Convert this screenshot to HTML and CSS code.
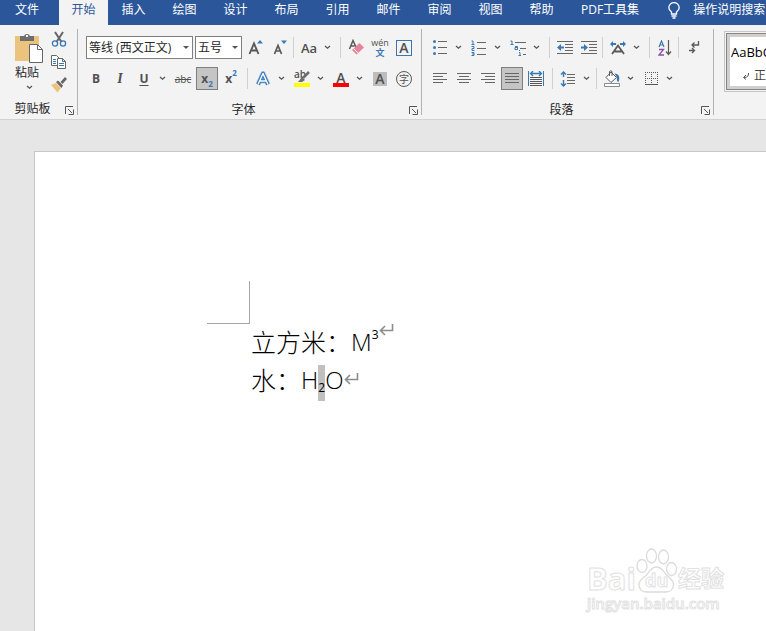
FILE: index.html
```
<!DOCTYPE html>
<html lang="zh-CN">
<head>
    <meta charset="utf-8">
    <title>Word</title>
    <link rel="stylesheet" href="styles.css">
</head>
<body>
    <svg class="defs" aria-hidden="true">
        <symbol id="chevron" viewBox="0 0 7 5"><path d="M1 1l2.500 2.200L6 1" fill="none" stroke="#555" stroke-width="1.300"/></symbol>
        <symbol id="launcher" viewBox="0 0 9 9"><path d="M.5 8V.5H8M3 3l4 4M8.500 3.500v5h-5" fill="none" stroke="#555"/></symbol>
        <symbol id="return" viewBox="0 0 15 12"><path d="M13.500 0v6.500H1.500M6 2L1.500 6.500 6 11" fill="none" stroke="#8c8c8c" stroke-width="1.600"/></symbol>
    </svg>

    <nav class="tabs">
        <a class="tab tab--file" href="#">文件</a>
        <a class="tab tab--active" href="#">开始</a>
        <a class="tab" href="#">插入</a>
        <a class="tab" href="#">绘图</a>
        <a class="tab" href="#">设计</a>
        <a class="tab" href="#">布局</a>
        <a class="tab" href="#">引用</a>
        <a class="tab" href="#">邮件</a>
        <a class="tab" href="#">审阅</a>
        <a class="tab" href="#">视图</a>
        <a class="tab" href="#">帮助</a>
        <a class="tab tab--wide" href="#">PDF工具集</a>
        <a class="tell-me" href="#">
            <svg width="12" height="17" viewBox="0 0 12 17" fill="none" stroke="#fff" stroke-width="1.300"><path d="M3.500 12V10C1.500 8.500.8 7.500.8 5.800a5.200 5.200 0 0 1 10.400 0c0 1.700-.7 2.700-2.700 4.200v2zM3.500 14h5M4.500 16h3"/></svg>
            <span>操作说明搜索</span>
        </a>
    </nav>

    <div class="ribbon">
        <section class="group group--clipboard">
            <div class="clipboard">
                <button class="paste">
                    <svg width="30" height="31" viewBox="0 0 30 31"><path fill="#ebc37d" d="M1 3h24v25H1z"/><path fill="#6d6d6d" d="M6 3h4a3.200 3.200 0 0 1 6 0h4v5H6z"/><path fill="#f3f3f3" d="M12 2h2v2h-2z"/><path fill="#fff" stroke="#666" d="M15.500 11.500h8l5 5v13h-13z"/><path fill="none" stroke="#666" d="M23.500 11.500v5h5"/></svg>
                    <span>粘贴</span>
                    <svg width="7" height="5"><use href="#chevron"/></svg>
                </button>
                <div class="clipboard__side">
                    <button class="tool" aria-label="剪切"><svg width="16" height="16" viewBox="0 0 16 16" fill="none"><path d="M4 1l6.500 10M12 1L5.500 11" stroke="#666" stroke-width="2"/><circle cx="4" cy="12.500" r="2.600" stroke="#3a78b4" stroke-width="1.300"/><circle cx="12" cy="12.500" r="2.600" stroke="#3a78b4" stroke-width="1.300"/></svg></button>
                    <button class="tool" aria-label="复制"><svg width="16" height="16" viewBox="0 0 16 16" fill="#fff" stroke="#666"><path d="M.5 1.500h5l3 3v7h-8z"/><path d="M6.500 4.500h5l3 3v7h-8z"/><path d="M11.500 4.500v3h3" fill="none"/><path d="M2 5.500h3M2 7.500h3M2 9.500h3M8 9.500h5M8 11.500h5" stroke="#3a78b4"/></svg></button>
                    <button class="tool" aria-label="格式刷"><svg width="16" height="16" viewBox="0 0 16 16"><path fill="#ebc37d" d="M0 8l5-2 5 5-3.500 4.500z"/><path fill="#666" d="M5 5l2-1.500 5 5L10.500 11zM9.500 5L14 0l2 2-4.500 5z"/></svg></button>
                </div>
            </div>
            <footer class="group__footer"><span>剪贴板</span><button class="launcher" aria-label="剪贴板设置"><svg width="9" height="9"><use href="#launcher"/></svg></button></footer>
        </section>

        <section class="group group--font">
            <div class="row">
                <div class="combo combo--font"><select aria-label="字体"><option>等线 (西文正文)</option></select></div>
                <div class="combo combo--size"><select aria-label="字号"><option>五号</option></select></div>
                <button class="tool" aria-label="增大字号"><svg width="16" height="18" viewBox="0 0 16 18"><path d="M1.500 15L6 4.500 10.500 15M3 11.500h6" fill="none" stroke="#595959" stroke-width="1.900"/><path fill="#3a78b4" d="M9 4.500h6l-3-3.500z"/></svg></button>
                <button class="tool" aria-label="减小字号"><svg width="16" height="18" viewBox="0 0 16 18"><path d="M2.500 15L6 6.500 9.500 15M4 12h4.500" fill="none" stroke="#595959" stroke-width="1.700"/><path fill="#3a78b4" d="M9 1.500h6l-3 3.500z"/></svg></button>
                <span class="sep sep--close"></span>
                <button class="tool tool--case">Aa</button>
                <button class="arrow" aria-label="大小写选项"><svg width="7" height="5"><use href="#chevron"/></svg></button>
                <span class="sep"></span>
                <button class="tool" aria-label="清除格式"><svg width="16" height="17" viewBox="0 0 16 17"><path d="M1.500 10L5 1.500 8 8M2.500 7h4" fill="none" stroke="#595959" stroke-width="1.500"/><path fill="#e5849a" d="M4 11L11.500 4 16 8.500 8.500 15.500z"/><path d="M5.500 9.500l4.500 4.500" stroke="#f3f3f3"/></svg></button>
                <button class="tool tool--pinyin"><span>wén</span><span class="pinyin__char">文</span></button>
                <button class="tool"><span class="char-border">A</span></button>
            </div>
            <div class="row">
                <button class="tool tool--bold">B</button>
                <button class="tool tool--italic">I</button>
                <button class="tool tool--underline">U</button>
                <button class="arrow" aria-label="下划线选项"><svg width="7" height="5"><use href="#chevron"/></svg></button>
                <button class="tool tool--strike">abc</button>
                <button class="tool tool--script tool--on">x<sub>2</sub></button>
                <button class="tool tool--script">x<sup>2</sup></button>
                <span class="sep"></span>
                <button class="tool" aria-label="文本效果"><svg width="16" height="16" viewBox="0 0 16 16" fill="none" stroke-linejoin="round"><path d="M3 13.500L8 2.500l5 11M5 10h6" stroke="#a9c9e8" stroke-width="5"/><path d="M3 13.500L8 2.500l5 11M5 10h6" stroke="#3a78b4" stroke-width="3.600"/><path d="M3 13.500L8 2.500l5 11M5 10h6" stroke="#fff" stroke-width="1.400"/></svg></button>
                <button class="arrow" aria-label="文本效果选项"><svg width="7" height="5"><use href="#chevron"/></svg></button>
                <button class="tool tool--color"><span class="marker">ab</span><svg class="marker__pen" width="12" height="12" viewBox="0 0 12 12"><path d="M11 1L5 7" stroke="#6d6d6d" stroke-width="2.500"/><path fill="#6d6d6d" d="M4 6l3 3-3 2H0z"/></svg><span class="swatch swatch--yellow"></span></button>
                <button class="arrow" aria-label="突出显示选项"><svg width="7" height="5"><use href="#chevron"/></svg></button>
                <button class="tool tool--color"><span class="letter">A</span><span class="swatch swatch--red"></span></button>
                <button class="arrow" aria-label="字体颜色选项"><svg width="7" height="5"><use href="#chevron"/></svg></button>
                <button class="tool"><span class="char-shade">A</span></button>
                <button class="tool"><span class="char-circle">字</span></button>
            </div>
            <footer class="group__footer"><span>字体</span><button class="launcher" aria-label="字体设置"><svg width="9" height="9"><use href="#launcher"/></svg></button></footer>
        </section>

        <section class="group group--paragraph">
            <div class="row">
                <button class="tool" aria-label="项目符号"><svg width="14" height="16" viewBox="0 0 14 16"><g fill="#3a78b4"><circle cx="1.500" cy="1.500" r="1.500"/><circle cx="1.500" cy="7.500" r="1.500"/><circle cx="1.500" cy="13.500" r="1.500"/></g><path d="M5 1.500h9M5 7.500h9M5 13.500h9" stroke="#666"/></svg></button>
                <button class="arrow" aria-label="项目符号选项"><svg width="7" height="5"><use href="#chevron"/></svg></button>
                <button class="tool" aria-label="编号"><svg width="16" height="16" viewBox="0 0 16 16" fill="none"><path d="M.5 1H2v3M.5 4.500h3M.5 6.500H3v2H1v2h2.500M.5 12.500H3v3H.5M1 14h2" stroke="#3a78b4"/><path d="M6 2.500h9M6 8.500h9M6 14.500h9" stroke="#666"/></svg></button>
                <button class="arrow" aria-label="编号选项"><svg width="7" height="5"><use href="#chevron"/></svg></button>
                <button class="tool" aria-label="多级列表"><svg width="17" height="16" viewBox="0 0 17 16" fill="none"><path d="M.5 1H2v3M.5 4.500h3M5 6.500h2.500v3H5v-2h2M9.500 10v1M9 12.500h1v3M8.500 15.500h2.500" stroke="#3a78b4"/><path d="M5 2.500h11M10 8.500h6M13 14.500h3" stroke="#666"/></svg></button>
                <button class="arrow" aria-label="多级列表选项"><svg width="7" height="5"><use href="#chevron"/></svg></button>
                <span class="sep"></span>
                <button class="tool" aria-label="减少缩进"><svg width="16" height="13" viewBox="0 0 16 13"><path d="M0 .5h16M8 3.500h8M8 6.500h8M8 9.500h8M0 12.500h16" stroke="#666"/><path fill="#3a78b4" d="M0 6.500L4 3v2.500h3v2H4V10z"/></svg></button>
                <button class="tool" aria-label="增加缩进"><svg width="16" height="13" viewBox="0 0 16 13"><path d="M0 .5h16M8 3.500h8M8 6.500h8M8 9.500h8M0 12.500h16" stroke="#666"/><path fill="#3a78b4" d="M7 6.500L3 3v2.500H0v2h3V10z"/></svg></button>
                <span class="sep sep--close"></span>
                <button class="tool" aria-label="中文版式"><svg width="16" height="14" viewBox="0 0 16 14"><path d="M2 13L8 4.500l6 8.500M4.500 10.500h7" fill="none" stroke="#595959" stroke-width="1.800"/><path fill="#3a78b4" d="M0 3l3-3v2h3v2H3v2zM16 3l-3-3v2h-3v2h3v2z"/></svg></button>
                <button class="arrow" aria-label="中文版式选项"><svg width="7" height="5"><use href="#chevron"/></svg></button>
                <span class="sep"></span>
                <button class="tool" aria-label="排序"><svg width="14" height="16" viewBox="0 0 14 16" fill="none"><path d="M1 7l2.500-6L6 7M2 5h3" stroke="#3a78b4" stroke-width="1.200"/><path d="M1 9.500h4.500L1 15h5" stroke="#8a4fa8" stroke-width="1.300"/><path d="M10.500 0v14M8 11.500l2.500 3 2.500-3" stroke="#595959" stroke-width="1.200"/></svg></button>
                <span class="sep sep--close"></span>
                <button class="tool" aria-label="显示编辑标记"><svg width="12" height="13" viewBox="0 0 12 13" fill="none" stroke="#595959" stroke-width="1.300"><path d="M10.500 0v4H4M6.500 1.500L4 4l2.500 2.500M1 9.500h5.500M4 7l2.500 2.500L4 12"/></svg></button>
            </div>
            <div class="row">
                <button class="tool" aria-label="左对齐"><svg width="14" height="11" viewBox="0 0 14 11"><path d="M0 .5h14M0 3.500h10M0 6.500h14M0 9.500h10" stroke="#666"/></svg></button>
                <button class="tool" aria-label="居中"><svg width="14" height="11" viewBox="0 0 14 11"><path d="M0 .5h14M2 3.500h10M0 6.500h14M2 9.500h10" stroke="#666"/></svg></button>
                <button class="tool" aria-label="右对齐"><svg width="14" height="11" viewBox="0 0 14 11"><path d="M0 .5h14M4 3.500h10M0 6.500h14M4 9.500h10" stroke="#666"/></svg></button>
                <button class="tool tool--on" aria-label="两端对齐"><svg width="14" height="11" viewBox="0 0 14 11"><path d="M0 .5h14M0 3.500h14M0 6.500h14M0 9.500h14" stroke="#666"/></svg></button>
                <button class="tool" aria-label="分散对齐"><svg width="16" height="15" viewBox="0 0 16 15"><path d="M.5 0v15M15.500 0v15" stroke="#3a78b4"/><path d="M2 6.500h12M2 8.500h12M2 10.500h12M2 12.500h12M2 14.500h12" stroke="#595959"/><path d="M3 2.500h10M5 0L2.500 2.500 5 5M11 0l2.500 2.500L11 5" fill="none" stroke="#3a78b4" stroke-width="1.300"/></svg></button>
                <span class="sep"></span>
                <button class="tool" aria-label="行距"><svg width="16" height="16" viewBox="0 0 16 16" fill="none"><path d="M3.500 1v5M1 3.500L3.500 1 6 3.500M3.500 9v6M1 12.500L3.500 15 6 12.500" stroke="#3a78b4" stroke-width="1.400"/><path d="M7 3.500h8M7 6.500h8M7 9.500h8M7 12.500h8" stroke="#666"/></svg></button>
                <button class="arrow" aria-label="行距选项"><svg width="7" height="5"><use href="#chevron"/></svg></button>
                <span class="sep sep--close"></span>
                <button class="tool" aria-label="底纹"><svg width="18" height="17" viewBox="0 0 18 17"><path fill="#fff" stroke="#595959" d="M3 7.500L8 2l5.500 5.500L8 12.500z"/><path d="M6.500 6V1.500Q8 0 9 1.500V6" fill="none" stroke="#595959"/><path fill="#3a78b4" d="M11.500 3.500C16 4 17.500 7 15.500 12c-1.500-.5-2-2-1.500-4.500z"/><path fill="#fff" stroke="#8a8a8a" d="M1.500 13.500h15v3h-15z"/></svg></button>
                <button class="arrow" aria-label="底纹选项"><svg width="7" height="5"><use href="#chevron"/></svg></button>
                <button class="tool" aria-label="边框"><svg width="13" height="13" viewBox="0 0 13 13"><path d="M0 .5h13M0 6.500h13M.5 0v13M6.500 0v13M12.500 0v13" stroke="#595959" stroke-dasharray="1 1"/><path d="M0 12.500h13" stroke="#595959"/></svg></button>
                <button class="arrow" aria-label="边框选项"><svg width="7" height="5"><use href="#chevron"/></svg></button>
            </div>
            <footer class="group__footer"><span>段落</span><button class="launcher" aria-label="段落设置"><svg width="9" height="9"><use href="#launcher"/></svg></button></footer>
        </section>

        <section class="gallery">
            <button class="style-card">
                <span class="style-card__sample">AaBbCcDd</span>
                <span class="style-card__name"><svg width="8" height="7" viewBox="0 0 8 7"><path d="M6.500 0Q7 4.500 2 4.500M4 2L1.500 4.500 4 6.500" fill="none" stroke="#555"/></svg>正文</span>
            </button>
        </section>
    </div>

    <main class="workspace">
        <article class="sheet">
            <div class="corner"></div>
            <div class="text">
                <p>立方米：<span>M<sup>3</sup></span><svg class="return return--raised" width="15" height="12"><use href="#return"/></svg></p>
                <p>水：<span>H<sub class="selected">2</sub>O</span><svg class="return" width="15" height="12"><use href="#return"/></svg></p>
            </div>
        </article>
        <div class="watermark">
            <div class="watermark__logo">
                <span class="watermark__bai">Bai</span>
                <span class="watermark__paw">
                    <svg width="42" height="46" viewBox="0 0 42 46" fill="#fff" stroke="#dcdcdc" stroke-width="1.300"><ellipse cx="6" cy="18" rx="5" ry="6.500"/><ellipse cx="15.500" cy="8" rx="5" ry="7"/><ellipse cx="27.500" cy="9" rx="5" ry="7"/><ellipse cx="35.500" cy="21" rx="5" ry="6.500"/><path d="M20.500 19c5 0 7 4 10 8 3 3 7 5 7 9.500 0 5-3.500 7.500-7.500 7.500H11c-5 0-8-3-8-7.500 0-5 4.500-6.500 7.500-9.500 3-4 5-8 10-8z"/></svg>
                    <span class="watermark__du">du</span>
                </span>
                <span class="watermark__cn">经验</span>
            </div>
            <div class="watermark__url">jingyan.baidu.com</div>
        </div>
    </main>
</body>
</html>
```
FILE: styles.css
```
* {
  box-sizing: border-box;
  margin: 0;
  padding: 0;
}

body {
  display: flex;
  flex-direction: column;
  min-height: 100vh;
  overflow: hidden;
  font-family: "Open Sans", "Noto Sans CJK SC", sans-serif;
  font-size: 12px;
  color: #262626;
  background-color: #e6e6e6;
}

button {
  border: none;
  background: none;
  font: inherit;
  color: inherit;
  cursor: pointer;
}

svg {
  flex: none;
}

.defs {
  position: absolute;
  width: 0;
  height: 0;
}

/* tabs */
.tabs {
  display: flex;
  height: 25px;
  line-height: 19px;
  white-space: nowrap;
  overflow: hidden;
  background-color: #2b579a;
}

.tab {
  flex: none;
  width: 51px;
  text-align: center;
  color: #fff;
  text-decoration: none;
}

.tab--file {
  width: 59px;
  padding-right: 5px;
}

.tab--active {
  width: 49px;
  color: #2b579a;
  background-color: #f3f3f3;
}

.tab--wide {
  width: auto;
  padding: 0 14px;
}

.tell-me {
  display: flex;
  align-items: flex-start;
  gap: 13px;
  margin-left: 15px;
  color: #fff;
  text-decoration: none;
}

.tell-me svg {
  margin-top: 2px;
}

/* ribbon */
.ribbon {
  display: flex;
  height: 95px;
  background-color: #f3f3f3;
  border-bottom: 1px solid #d2d2d2;
}

.group {
  position: relative;
  display: flex;
  flex: none;
  flex-direction: column;
  gap: 8px;
  padding: 11px 0 0 6px;
}

.group::after {
  content: "";
  position: absolute;
  top: 4px;
  right: 0;
  bottom: 4px;
  width: 1px;
  background-color: #b1b1b1;
}

.group--clipboard {
  gap: 0;
  width: 78px;
  padding: 2px 0 0;
}

.group--font {
  width: 344px;
}

.group--paragraph {
  width: 292px;
}

.group__footer {
  display: flex;
  align-items: center;
  height: 22px;
  margin-top: auto;
  margin-right: 1px;
}

.group__footer span {
  flex: 1;
  text-align: center;
}

.group--font .group__footer,
.group--paragraph .group__footer {
  margin-left: -6px;
}

.launcher {
  display: flex;
  width: 12px;
  padding-top: 4px;
}

.row {
  display: flex;
  align-items: center;
  height: 23px;
}

.tool {
  display: flex;
  flex: none;
  align-items: center;
  justify-content: center;
  width: 24px;
  height: 23px;
  color: #505050;
}

.tool--on {
  width: 22px;
  margin: 0 1px;
  background-color: #c5c5c5;
  border: 1px solid #7f7f7f;
}

.arrow {
  display: flex;
  flex: none;
  align-items: center;
  justify-content: center;
  width: 15px;
  height: 23px;
  padding-right: 3px;
}

.sep {
  flex: none;
  width: 1px;
  height: 21px;
  margin: 0 3px 0 4px;
  background-color: #d0d0d0;
}

.sep--close {
  margin-left: 1px;
}

/* clipboard */
.clipboard {
  display: flex;
  gap: 3px;
  padding-left: 14px;
}

.paste {
  display: flex;
  flex-direction: column;
  align-items: center;
  width: 30px;
  padding-top: 6px;
  line-height: 18px;
}

.paste span {
  padding-right: 4px;
}

.paste > svg:last-child {
  margin-top: 3px;
}

.clipboard__side {
  display: flex;
  flex-direction: column;
}

/* font */
.combo {
  position: relative;
  flex: none;
  height: 23px;
}

.combo--font {
  width: 107px;
  margin: 0 2px;
}

.combo--size {
  width: 47px;
  margin-right: 2px;
}

.combo select {
  width: 100%;
  height: 100%;
  padding-left: 2px;
  border: 1px solid #7f7f7f;
  border-radius: 0;
  background-color: #fff;
  font: inherit;
  color: #262626;
  appearance: none;
}

.combo::after {
  content: "";
  position: absolute;
  top: 10px;
  right: 4px;
  border: 3px solid transparent;
  border-top-color: #555;
  border-bottom: none;
  pointer-events: none;
}

.tool--case {
  font-size: 13px;
  font-weight: 600;
}

.tool--pinyin {
  flex-direction: column;
  font-size: 9px;
  line-height: 10px;
}

.pinyin__char {
  font-weight: bold;
  color: #3a78b4;
}

.char-border,
.char-shade,
.char-circle {
  width: 16px;
  height: 16px;
  font-size: 14px;
  font-weight: 600;
  line-height: 14px;
  text-align: center;
}

.char-border {
  border: 1px solid #3a78b4;
}

.char-shade {
  width: 14px;
  height: 14px;
  background-color: #bdbdbd;
}

.char-circle {
  border: 1px solid #595959;
  border-radius: 50%;
  font-size: 10px;
  font-weight: normal;
}

.tool--bold {
  font-weight: bold;
}

.tool--italic {
  font-family: "Liberation Serif", serif;
  font-size: 14px;
  font-style: italic;
  font-weight: bold;
}

.tool--underline {
  font-weight: bold;
  text-decoration: underline;
  text-underline-offset: 2px;
}

.tool--strike {
  font-size: 10px;
  text-decoration: line-through;
}

.tool--script {
  font-weight: bold;
}

.tool--script sub,
.tool--script sup {
  align-self: flex-end;
  font-size: 8px;
  line-height: 11px;
  color: #3a78b4;
}

.tool--script sup {
  align-self: flex-start;
}

.tool--color {
  position: relative;
  flex-direction: column;
  font-weight: 600;
}

.marker {
  width: 16px;
  height: 13px;
  font-size: 10px;
  line-height: 8px;
  text-align: left;
}

.marker__pen {
  position: absolute;
  top: 4px;
  right: 4px;
}

.letter {
  height: 13px;
  font-size: 14px;
  line-height: 15px;
}

.swatch {
  width: 16px;
  height: 4px;
}

.swatch--yellow {
  background-color: #ff0;
}

.swatch--red {
  background-color: #f00;
}

/* styles gallery */
.gallery {
  flex: 1;
  align-self: flex-start;
  min-width: 0;
  margin: 6px 0 0 10px;
  padding: 1px;
  overflow: hidden;
  border: 1px solid #c6c6c6;
  border-right: none;
}

.style-card {
  display: flex;
  flex-direction: column;
  width: 76px;
  height: 57px;
  padding: 9px 3px 0;
  border: 1px solid #858585;
  outline: 3px solid #d0cfcd;
  outline-offset: -4px;
  background-color: #fff;
  text-align: left;
}

.style-card__sample {
  padding-left: 1px;
  font-size: 13px;
  line-height: 18px;
  color: #000;
}

.style-card__name {
  display: flex;
  align-items: center;
  gap: 4px;
  padding-left: 12px;
  line-height: 30px;
  color: #444;
}

/* document */
.workspace {
  position: relative;
  display: flex;
  flex: 1;
  padding: 31px 0 0 34px;
}

.sheet {
  flex: 1;
  padding: 129px 0 0 172px;
  background-color: #fff;
  border: 1px solid #c6c6c6;
  border-width: 1px 0 0 1px;
}

.corner {
  width: 43px;
  height: 43px;
  border: 1px solid #a6a6a6;
  border-width: 0 1px 1px 0;
}

.text {
  padding-left: 44px;
  font-size: 25px;
  font-weight: 300;
  line-height: 36px;
  color: #000;
}

.text p {
  display: flex;
  height: 38px;
}

.text span {
  font-family: "Open Sans", sans-serif;
  font-size: 24px;
}

.text sup,
.text sub {
  font-size: 12px;
  font-weight: normal;
  line-height: 1;
}

.text sup {
  vertical-align: 12px;
}

.text .selected {
  display: inline-block;
  height: 36px;
  padding-top: 10px;
  line-height: 26px;
  vertical-align: middle;
  background-color: #c0c0c0;
}

.return {
  align-self: center;
  margin-bottom: 4px;
}

.return--raised {
  margin-bottom: 26px;
}

/* watermark */
.watermark {
  position: absolute;
  right: 42px;
  bottom: 18px;
  color: #fff;
  font-weight: bold;
  -webkit-text-stroke: 1px #e2e2e2;
}

.watermark__logo {
  display: flex;
  align-items: flex-end;
  height: 46px;
}

.watermark__bai {
  font-size: 31px;
  line-height: 32px;
}

.watermark__paw {
  position: relative;
  height: 46px;
}

.watermark__du {
  position: absolute;
  left: 9px;
  bottom: 4px;
  font-size: 18px;
  line-height: 20px;
}

.watermark__cn {
  font-size: 23px;
  line-height: 32px;
}

.watermark__url {
  font-size: 15px;
  font-weight: 600;
  line-height: 19px;
}
```
